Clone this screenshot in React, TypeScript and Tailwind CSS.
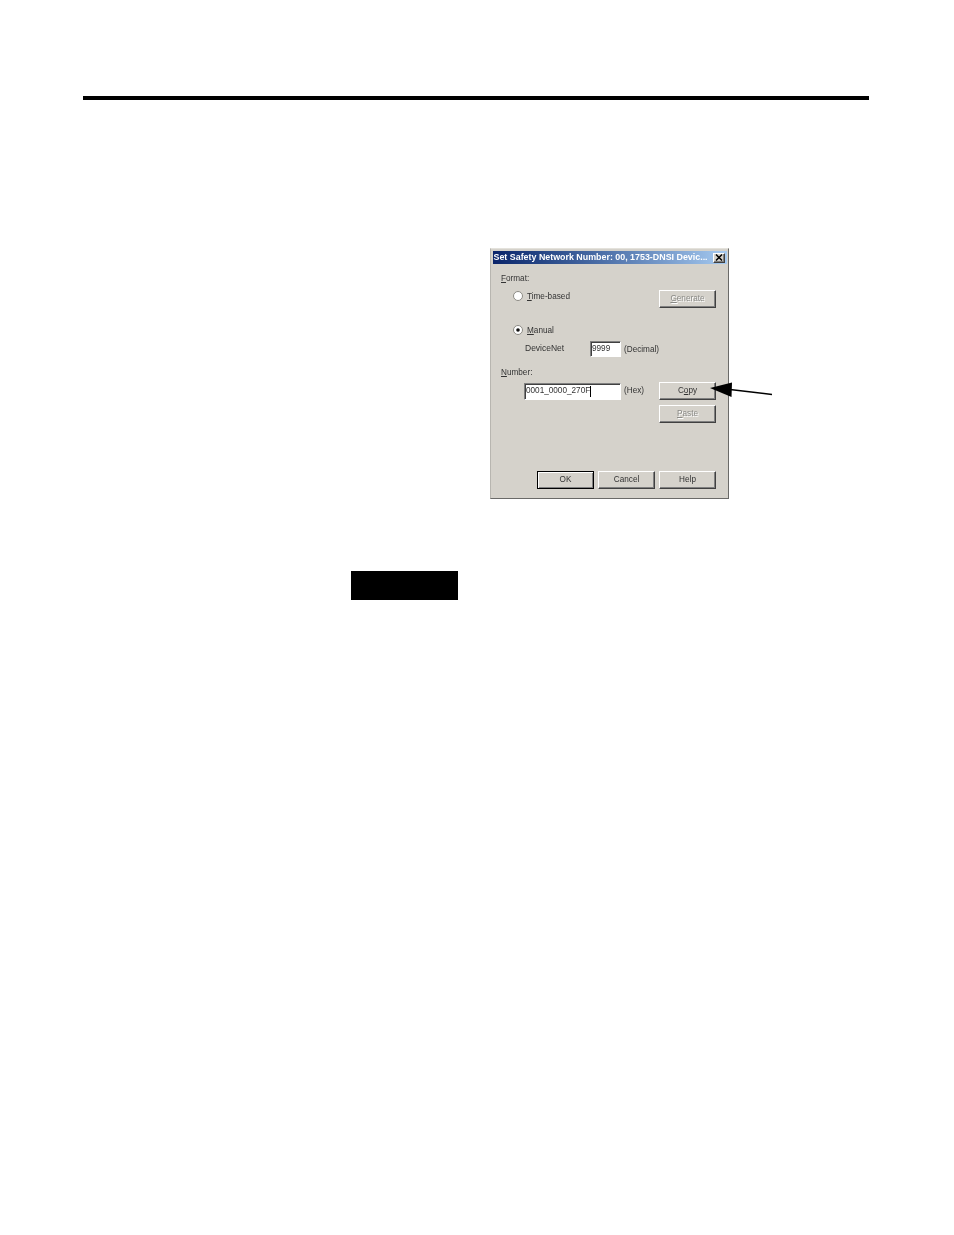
const bevel = 'border border-t-white border-l-white border-r-[#404040] border-b-[#404040] shadow-[inset_-1px_-1px_0_#808080]'
const field = 'border border-t-[#808080] border-l-[#808080] border-r-white border-b-white bg-white shadow-[inset_1px_1px_0_#404040]'

function DialogButton({ label, mnemonic, disabled, isDefault }: { label: string; mnemonic?: number; disabled?: boolean; isDefault?: boolean }) {
  const chars = label.split('')
  return (
    <div className={`flex h-[18px] w-[57px] shrink-0 items-center justify-center text-[8.2px] ${isDefault ? 'border border-black shadow-[inset_1px_1px_0_#fff,inset_-1px_-1px_0_#808080]' : bevel} ${disabled ? 'text-[#8a8a86] [text-shadow:1px_1px_0_#fff]' : 'text-[#333]'}`}>
      <span>
        {chars.map((c, i) => (
          <span key={i} className={i === mnemonic ? 'underline' : ''}>{c}</span>
        ))}
      </span>
    </div>
  )
}

function Radio({ checked }: { checked?: boolean }) {
  return (
    <svg width="10" height="10" viewBox="0 0 10 10" className="shrink-0">
      <circle cx="5" cy="5" r="4.5" fill="#fff" stroke="#8c8a84" />
      {checked && <circle cx="5" cy="5" r="1.8" fill="#111" />}
    </svg>
  )
}

export default function App() {
  return (
    <div className="relative min-h-[1235px] w-[954px] overflow-hidden bg-white pt-[96px] font-['Liberation_Sans',sans-serif]">
      <div className="ml-[83px] h-1 w-[786px] bg-black" />

      <div className="relative ml-[490px] mt-[148px] flex h-[251px] w-[239px] flex-col border border-t-[#e4e2dc] border-l-[#b8b6b0] border-r-[#6a6a68] border-b-[#6a6a68] bg-[#d5d2cb] text-[8.2px] text-[#333] blur-[0.25px]">
        <div className="ml-[1.5px] mr-[1px] mt-[2px] flex h-[13px] items-center justify-between bg-gradient-to-r from-[#0a246a] to-[#a6caf0] pl-[1px] pr-[2px]">
          <span className="whitespace-nowrap text-[8.9px] font-bold text-white">Set Safety Network Number: 00, 1753-DNSI Devic...</span>
          <div className={`flex h-[10px] w-[12px] items-center justify-center bg-[#d5d2cb] ${bevel}`}>
            <svg width="8" height="7" viewBox="0 0 8 7">
              <path d="M1 0.5L7 6.5M7 0.5L1 6.5" stroke="#000" strokeWidth="1.5" />
            </svg>
          </div>
        </div>

        <div className="flex flex-col pl-[10px] pr-[12px]">
          <div className="mt-[9px] h-[11px] leading-[12px]"><span className="underline">F</span>ormat:</div>

          <div className="mt-[6px] flex h-[18px] items-start justify-between">
            <div className="flex h-[10px] items-center gap-[4px] pl-[12px] pt-[1px]">
              <Radio />
              <span className="pt-[4px]"><span className="underline">T</span>ime-based</span>
            </div>
            <DialogButton label="Generate" mnemonic={0} disabled />
          </div>

          <div className="mt-[16px] flex h-[12px] items-center gap-[4px] pl-[12px]">
            <Radio checked />
            <span className="pt-[2px]"><span className="underline">M</span>anual</span>
          </div>

          <div className="mt-[5px] flex h-[16px] items-center pl-[24px]">
            <span className="w-[65px] pb-[1px] text-[8.5px]">DeviceNet</span>
            <div className={`flex h-[16px] w-[31px] items-center pl-[1px] pt-[1px] ${field}`}>9999</div>
            <span className="ml-[3px] pt-[2px]">(Decimal)</span>
          </div>

          <div className="mt-[10px] h-[11px] leading-[12px]"><span className="underline">N</span>umber:</div>

          <div className="mt-[4px] flex h-[18px] items-center justify-between">
            <div className="flex items-center pl-[23px]">
              <div className={`flex h-[17px] w-[97px] items-center pl-[1px] ${field}`}>
                0001_0000_270F<span className="h-[11px] w-px bg-black" />
              </div>
              <span className="ml-[3px] pt-[1px]">(Hex)</span>
            </div>
            <DialogButton label="Copy" mnemonic={1} />
          </div>

          <div className="mt-[5px] flex justify-end">
            <DialogButton label="Paste" mnemonic={0} disabled />
          </div>

          <div className="mt-[48px] flex justify-end gap-[4px]">
            <DialogButton label="OK" isDefault />
            <DialogButton label="Cancel" />
            <DialogButton label="Help" />
          </div>
        </div>
      </div>

      <div className="ml-[351px] mt-[72px] h-[29px] w-[107px] bg-black" />

      {/* arrow pointing at the Copy button */}
      <svg className="absolute left-[705px] top-[378px]" width="72" height="24" viewBox="0 0 72 24">
        <path d="M5 10L27 4.5L26.5 19Z" fill="#000" />
        <path d="M25 11.5L67 16.5" stroke="#000" strokeWidth="1.6" />
      </svg>
    </div>
  )
}
